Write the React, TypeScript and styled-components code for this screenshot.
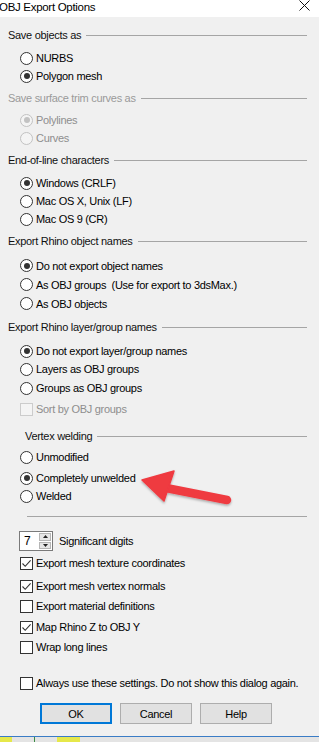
import React from "react";
import styled, { createGlobalStyle } from "styled-components";

const GlobalStyle = createGlobalStyle`
  html, body { margin: 0; padding: 0; background: #f0f0f0; }
  body {
    font-family: "Liberation Sans", Arial, sans-serif;
    font-size: 11px;
    letter-spacing: -0.3px;
    color: #000;
  }
  * { box-sizing: border-box; }
`;

const Dialog = styled.div`
  position: relative;
  width: 319px;
  height: 742px;
  background: #f0f0f0;
  display: flex;
  flex-direction: column;
  overflow: hidden;
`;

const TitleBar = styled.div`
  height: 17px;
  background: #ffffff;
  display: flex;
  align-items: center;
  justify-content: space-between;
  padding-right: 9px;
`;

const TitleText = styled.span`
  font-size: 11.5px;
  margin-left: -1px;
  color: #000;
  line-height: 17px;
  margin-top: -2px;
`;

const CloseIcon = styled.svg`
  width: 11px;
  height: 11px;
  margin-top: -6px;
`;

const GroupHeader = styled.div<{ $mt: number; $indent?: number; $disabled?: boolean }>`
  display: flex;
  align-items: center;
  gap: 5px;
  height: 18px;
  margin-top: ${(p) => p.$mt}px;
  padding-left: ${(p) => p.$indent ?? 8}px;
  padding-right: 12px;
  color: ${(p) => (p.$disabled ? "#9a9a9a" : "#111")};
  white-space: nowrap;
`;

const HeaderLine = styled.div`
  flex: 1;
  height: 1px;
  background: #a5a5a5;
`;

const OptionRow = styled.div<{ $mt: number; $h?: number }>`
  display: flex;
  align-items: center;
  gap: 3px;
  height: ${(p) => p.$h ?? 18}px;
  margin-top: ${(p) => p.$mt}px;
  padding-left: 20px;
  white-space: pre;
`;

const Label = styled.span<{ $disabled?: boolean }>`
  color: ${(p) => (p.$disabled ? "#8e8e8e" : "#000")};
`;

const RadioCircle = styled.span<{ $checked?: boolean; $disabled?: boolean }>`
  position: relative;
  width: 13px;
  height: 13px;
  border-radius: 50%;
  border: 1px solid ${(p) => (p.$disabled ? "#c2c2c2" : "#333")};
  background: ${(p) => (p.$disabled ? "#f4f4f4" : "#fff")};
  flex-shrink: 0;
  &::after {
    content: "";
    display: ${(p) => (p.$checked ? "block" : "none")};
    position: absolute;
    left: 2.5px;
    top: 2.5px;
    width: 6px;
    height: 6px;
    border-radius: 50%;
    background: ${(p) => (p.$disabled ? "#c2c2c2" : "#333")};
  }
`;

const CheckBox = styled.span<{ $disabled?: boolean }>`
  display: flex;
  align-items: center;
  justify-content: center;
  width: 13px;
  height: 13px;
  border: 1px solid ${(p) => (p.$disabled ? "#cccccc" : "#333")};
  background: ${(p) => (p.$disabled ? "#f4f4f4" : "#fff")};
  flex-shrink: 0;
`;

const Separator = styled.div<{ $mt: number }>`
  height: 1px;
  margin-top: ${(p) => p.$mt}px;
  margin-left: 27px;
  margin-right: 12px;
  background: #a5a5a5;
  flex-shrink: 0;
`;

const SpinnerRow = styled.div<{ $mt: number }>`
  display: flex;
  align-items: center;
  gap: 6px;
  height: 20px;
  margin-top: ${(p) => p.$mt}px;
  padding-left: 19px;
`;

const SpinBox = styled.div`
  display: flex;
  width: 34px;
  height: 20px;
  background: #fff;
  border: 1px solid #7a7a7a;
`;

const SpinValue = styled.span`
  flex: 1;
  padding-left: 4px;
  line-height: 18px;
  font-size: 12px;
`;

const SpinButtons = styled.div`
  display: flex;
  flex-direction: column;
  width: 13px;
  padding: 1px 1px 1px 0;
  gap: 1px;
`;

const SpinButton = styled.div`
  flex: 1;
  background: #e6e6e6;
  border: 1px solid #b5b5b5;
  display: flex;
  align-items: center;
  justify-content: center;
`;

const ButtonRow = styled.div<{ $mt: number }>`
  display: flex;
  gap: 8px;
  padding-left: 40px;
  margin-top: ${(p) => p.$mt}px;
`;

const DialogButton = styled.button<{ $default?: boolean }>`
  width: 72px;
  height: 21px;
  font: inherit;
  letter-spacing: -0.3px;
  color: #000;
  background: #e1e1e1;
  border: ${(p) => (p.$default ? "2px solid #0078d7" : "1px solid #adadad")};
  padding: 0;
`;

const BottomEdge = styled.div`
  margin-top: auto;
  height: 1px;
  background: #3a7cc6;
`;

const BackStrip = styled.div`
  display: flex;
  align-items: stretch;
  height: 5px;
  background: #e4e4e4;
`;

const Blob = styled.div<{ $w: number; $ml: number; $color: string }>`
  width: ${(p) => p.$w}px;
  margin-left: ${(p) => p.$ml}px;
  background: ${(p) => p.$color};
`;

const ArrowOverlay = styled.svg`
  position: absolute;
  left: 136px;
  top: 462px;
  width: 100px;
  height: 46px;
  overflow: visible;
`;

const Check = () => (
  <svg width="11" height="11" viewBox="0 0 11 11">
    <path d="M1.5 5.5 L4.2 8.3 L9.6 2.4" fill="none" stroke="#333" strokeWidth="1.1" />
  </svg>
);

const Radio = ({ label, checked, disabled, mt, h }: { label: string; checked?: boolean; disabled?: boolean; mt: number; h?: number }) => (
  <OptionRow $mt={mt} $h={h}>
    <RadioCircle $checked={checked} $disabled={disabled} />
    <Label $disabled={disabled}>{label}</Label>
  </OptionRow>
);

const CheckRow = ({ label, checked, disabled, mt }: { label: string; checked?: boolean; disabled?: boolean; mt: number }) => (
  <OptionRow $mt={mt}>
    <CheckBox $disabled={disabled}>{checked ? <Check /> : null}</CheckBox>
    <Label $disabled={disabled}>{label}</Label>
  </OptionRow>
);

const Header = ({ text, mt, indent, disabled }: { text: string; mt: number; indent?: number; disabled?: boolean }) => (
  <GroupHeader $mt={mt} $indent={indent} $disabled={disabled}>
    <span>{text}</span>
    <HeaderLine />
  </GroupHeader>
);

export default function App() {
  return (
    <>
      <GlobalStyle />
      <Dialog>
        <TitleBar>
          <TitleText>OBJ Export Options</TitleText>
          <CloseIcon viewBox="0 0 11 11">
            <path d="M0.5 0.5 L10.5 10.5 M10.5 0.5 L0.5 10.5" stroke="#111" strokeWidth="1" />
          </CloseIcon>
        </TitleBar>

        <Header text="Save objects as" mt={9} />
        <Radio label="NURBS" mt={5} />
        <Radio label="Polygon mesh" checked mt={0} />

        <Header text="Save surface trim curves as" mt={4} disabled />
        <Radio label="Polylines" checked disabled mt={4} />
        <Radio label="Curves" disabled mt={0} />

        <Header text="End-of-line characters" mt={4} />
        <Radio label="Windows (CRLF)" checked mt={5} />
        <Radio label="Mac OS X, Unix (LF)" mt={0} />
        <Radio label="Mac OS 9 (CR)" mt={0} />

        <Header text="Export Rhino object names" mt={4} />
        <Radio label="Do not export object names" checked mt={6} h={19} />
        <Radio label="As OBJ groups  (Use for export to 3dsMax.)" mt={0} h={19} />
        <Radio label="As OBJ objects" mt={0} h={19} />

        <Header text="Export Rhino layer/group names" mt={5} />
        <Radio label="Do not export layer/group names" checked mt={6} />
        <Radio label="Layers as OBJ groups" mt={0} />
        <Radio label="Groups as OBJ groups" mt={1} />
        <CheckRow label="Sort by OBJ groups" disabled mt={3} />

        <Header text="Vertex welding" mt={9} indent={25} />
        <Radio label="Unmodified" mt={3} />
        <Radio label="Completely unwelded" checked mt={3} />
        <Radio label="Welded" mt={0} />

        <Separator $mt={11} />

        <SpinnerRow $mt={14}>
          <SpinBox>
            <SpinValue>7</SpinValue>
            <SpinButtons>
              <SpinButton>
                <svg width="5" height="3" viewBox="0 0 5 3"><path d="M0 3 L2.5 0 L5 3 Z" fill="#222" /></svg>
              </SpinButton>
              <SpinButton>
                <svg width="5" height="3" viewBox="0 0 5 3"><path d="M0 0 L2.5 3 L5 0 Z" fill="#222" /></svg>
              </SpinButton>
            </SpinButtons>
          </SpinBox>
          <span>Significant digits</span>
        </SpinnerRow>

        <CheckRow label="Export mesh texture coordinates" checked mt={3} />
        <CheckRow label="Export mesh vertex normals" checked mt={5} />
        <CheckRow label="Export material definitions" mt={2} />
        <CheckRow label="Map Rhino Z to OBJ Y" checked mt={3} />
        <CheckRow label="Wrap long lines" mt={2} />

        <CheckRow label="Always use these settings. Do not show this dialog again." mt={18} />

        <ButtonRow $mt={11}>
          <DialogButton $default>OK</DialogButton>
          <DialogButton>Cancel</DialogButton>
          <DialogButton>Help</DialogButton>
        </ButtonRow>

        <BottomEdge />
        <BackStrip>
          <Blob $w={12} $ml={0} $color="#e6e84a" />
          <Blob $w={1} $ml={22} $color="#3b8a45" />
          <Blob $w={23} $ml={22} $color="#e6e84a" />
        </BackStrip>

        <ArrowOverlay viewBox="0 0 100 46">
          <defs>
            <filter id="sh" x="-20%" y="-20%" width="140%" height="160%">
              <feDropShadow dx="0" dy="1.5" stdDeviation="1.2" floodColor="#000" floodOpacity="0.3" />
            </filter>
          </defs>
          <g filter="url(#sh)" fill="#ef3a41" stroke="#ef3a41">
            <line x1="20" y1="24" x2="91" y2="38" strokeWidth="8.5" strokeLinecap="round" />
            <polygon points="6,18 38,9 28,39" strokeWidth="1.5" strokeLinejoin="round" />
          </g>
        </ArrowOverlay>
      </Dialog>
    </>
  );
}
